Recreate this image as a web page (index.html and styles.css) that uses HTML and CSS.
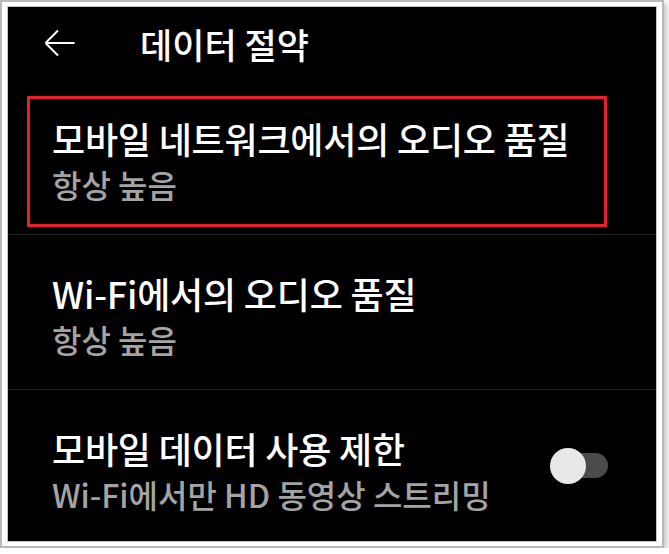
FILE: index.html
```html
<!DOCTYPE html>
<html>
<head>
    <meta charset="utf-8">
    <title>데이터 절약</title>
    <link rel="stylesheet" href="styles.css">
</head>
<body>
    <div class="frame">
        <div class="screen">
            <div class="header">
                <svg class="back" width="31" height="28" viewBox="0 0 31 28">
                    <path d="M1.5 14 H30.5 M1.5 14 L14 1.5 M1.5 14 L14 26.5" fill="none" stroke="#fff" stroke-width="2"/>
                </svg>
                <span class="title">데이터 절약</span>
            </div>
            <div class="row">
                <div class="highlight"></div>
                <div class="texts">
                    <div class="main">모바일 네트워크에서의 오디오 품질</div>
                    <div class="sub">항상 높음</div>
                </div>
            </div>
            <div class="row">
                <div class="texts">
                    <div class="main">Wi-Fi에서의 오디오 품질</div>
                    <div class="sub">항상 높음</div>
                </div>
            </div>
            <div class="row last">
                <div class="texts">
                    <div class="main">모바일 데이터 사용 제한</div>
                    <div class="sub">Wi-Fi에서만 HD 동영상 스트리밍</div>
                </div>
                <div class="toggle">
                    <div class="track"></div>
                    <div class="thumb"></div>
                </div>
            </div>
        </div>
    </div>
</body>
</html>
```

FILE: styles.css
```css
body{
    margin: 0;
    background-color: #ffffff;
    font-family: "Noto Sans CJK KR", "Noto Sans", sans-serif;
}

.frame{
    width: 664px;
    height: 548px;
    box-sizing: border-box;
    border: 2px solid #b9b9b9;
    padding: 4px 5px;
    background-color: #ffffff;
    box-shadow: 3px 3px 5px rgba(0, 0, 0, 0.22);
}

.screen{
    height: 100%;
    box-sizing: border-box;
    border: 1px solid #c4c4c4;
    background-color: #000000;
    overflow: hidden;
}

.header{
    height: 73px;
    display: flex;
    align-items: center;
    padding-left: 36px;
}

.back{
    display: block;
    margin-top: -2px;
}

.title{
    margin-left: 65px;
    color: #ffffff;
    font-size: 35px;
    font-weight: 500;
    line-height: 40px;
}

.row{
    position: relative;
    height: 155px;
    box-sizing: border-box;
    border-bottom: 1px solid #232323;
    padding: 38px 48px 0 44px;
    display: flex;
}

.row.last{
    border-bottom: none;
}

.texts{
    flex: 1;
}

.main{
    color: #ffffff;
    font-size: 36px;
    font-weight: 500;
    line-height: 40px;
    letter-spacing: -0.2px;
}

.sub{
    margin-top: 6px;
    color: #a4a4a4;
    font-size: 32px;
    font-weight: 500;
    line-height: 40px;
}

.highlight{
    position: absolute;
    left: 19px;
    top: 16px;
    width: 580px;
    height: 131px;
    box-sizing: border-box;
    border: 3px solid #e8202b;
}

.toggle{
    position: relative;
    width: 58px;
    height: 36px;
    margin-top: 20px;
}

.track{
    position: absolute;
    left: 11px;
    right: 0;
    top: 5px;
    height: 25px;
    border-radius: 13px;
    background-color: #4b4b4b;
}

.thumb{
    position: absolute;
    left: 0;
    top: 0;
    width: 36px;
    height: 36px;
    border-radius: 50%;
    background-color: #e8e8e8;
}
```
